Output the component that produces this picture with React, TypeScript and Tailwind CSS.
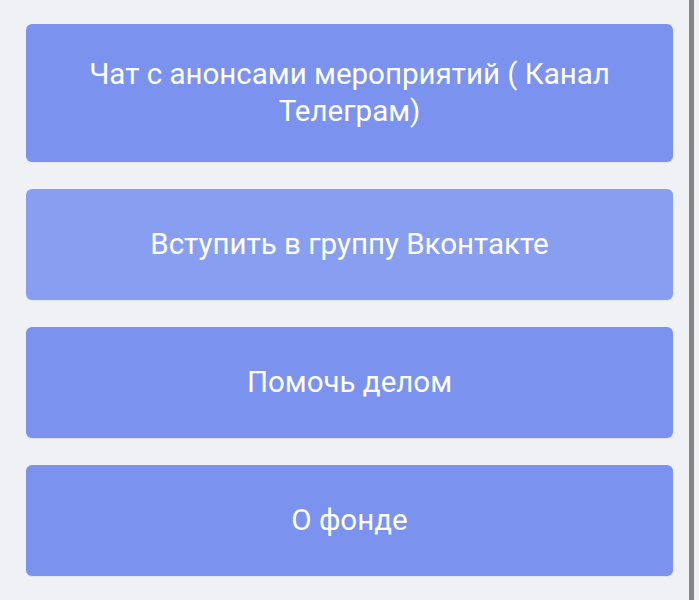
const links = [
  { label: "Чат с анонсами мероприятий ( Канал Телеграм)", tall: true },
  { label: "Вступить в группу Вконтакте", active: true },
  { label: "Помочь делом" },
  { label: "О фонде" },
];

export default function App() {
  return (
    <div
      className="flex min-h-[600px] bg-[#f0f1f5]"
      style={{ fontFamily: "Roboto, 'Noto Sans', sans-serif" }}
    >
      <div className="ml-[26px] flex w-[647px] flex-col gap-[27px] pt-[24px]">
        {links.map((link) => (
          <button
            key={link.label}
            type="button"
            className={
              "flex w-full items-center justify-center rounded-[6px] px-10 text-center text-[29.5px] leading-[37px] text-white shadow-[0_1px_1px_rgba(0,0,0,0.06)] " +
              (link.tall ? "h-[138px] " : "h-[111px] ") +
              (link.active ? "bg-[#889ef1]" : "bg-[#7b93ef]")
            }
          >
            {link.label}
          </button>
        ))}
      </div>
      <div className="ml-[16px] w-[5px] bg-[#868686]" />
    </div>
  );
}
